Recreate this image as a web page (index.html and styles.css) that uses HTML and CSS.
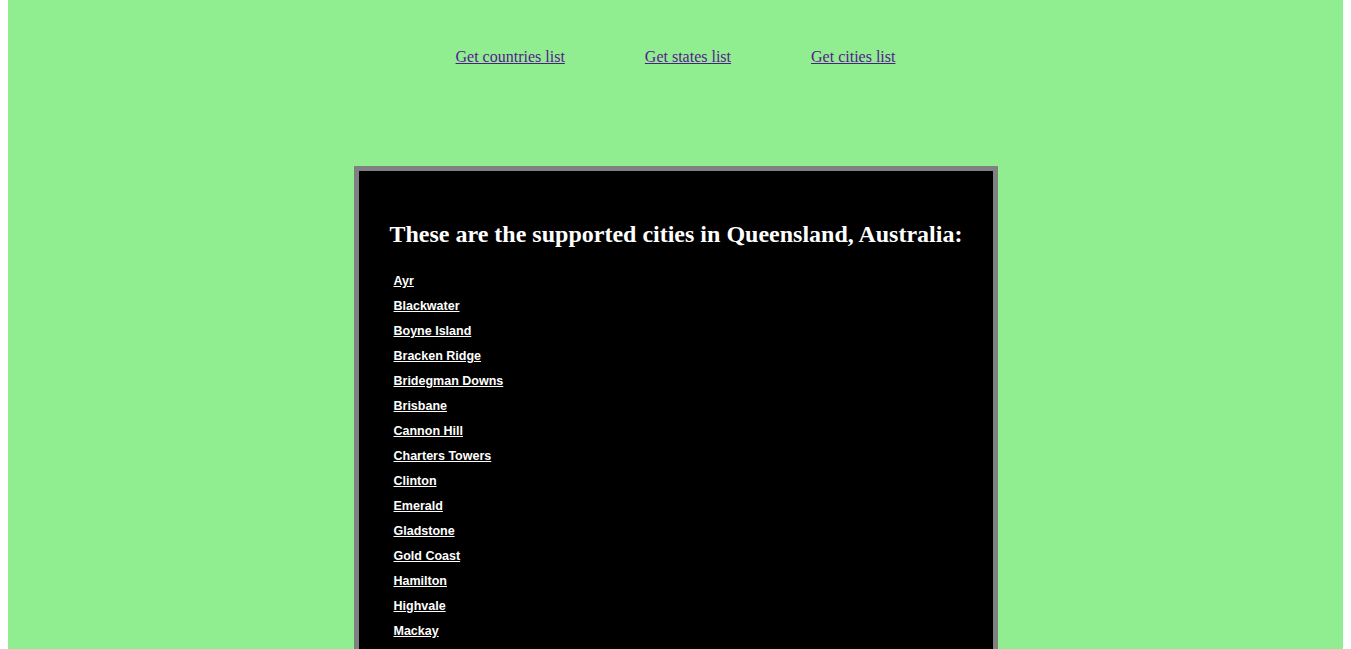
FILE: index.html
```html
<!DOCTYPE html>
<html>
<head>
<meta charset="utf-8">
<link rel="stylesheet" href="styles.css">
</head>
<body>
<div class="page">
  <nav class="nav">
    <a href="#">Get countries list</a>
    <a href="#">Get states list</a>
    <a href="#">Get cities list</a>
  </nav>
  <div class="panel">
    <h2 class="title">These are the supported cities in Queensland, Australia:</h2>
    <ul class="cities">
      <li><a href="#">Ayr</a></li>
      <li><a href="#">Blackwater</a></li>
      <li><a href="#">Boyne Island</a></li>
      <li><a href="#">Bracken Ridge</a></li>
      <li><a href="#">Bridegman Downs</a></li>
      <li><a href="#">Brisbane</a></li>
      <li><a href="#">Cannon Hill</a></li>
      <li><a href="#">Charters Towers</a></li>
      <li><a href="#">Clinton</a></li>
      <li><a href="#">Emerald</a></li>
      <li><a href="#">Gladstone</a></li>
      <li><a href="#">Gold Coast</a></li>
      <li><a href="#">Hamilton</a></li>
      <li><a href="#">Highvale</a></li>
      <li><a href="#">Mackay</a></li>
    </ul>
  </div>
</div>
</body>
</html>
```
FILE: styles.css
```css
html, body {
  margin: 0;
  padding: 0;
  background: #ffffff;
}
body {
  padding: 0 8px;
}
.page {
  background: #90ee90;
  padding-top: 48px;
  padding-bottom: 40px;
  font-family: "Liberation Serif", "Times New Roman", serif;
}
.nav {
  display: flex;
  justify-content: center;
  gap: 80px;
  font-size: 16px;
  line-height: 18px;
}
.nav a {
  color: #551a8b;
}
.panel {
  width: 573px;
  margin: 100px auto 0;
  background: #000;
  border: 5px solid #808080;
  padding: 30px 30px 60px 31px;
}
.title {
  margin: 20px 0 21px;
  font-size: 24px;
  font-weight: bold;
  color: #fff;
  white-space: nowrap;
}
.cities {
  list-style: none;
  margin: 0;
  padding: 0 0 0 4px;
  font-family: "Liberation Sans", Arial, sans-serif;
  font-size: 12.5px;
  font-weight: bold;
}
.cities li {
  height: 25px;
  line-height: 25px;
}
.cities a {
  color: #fff;
}
```
